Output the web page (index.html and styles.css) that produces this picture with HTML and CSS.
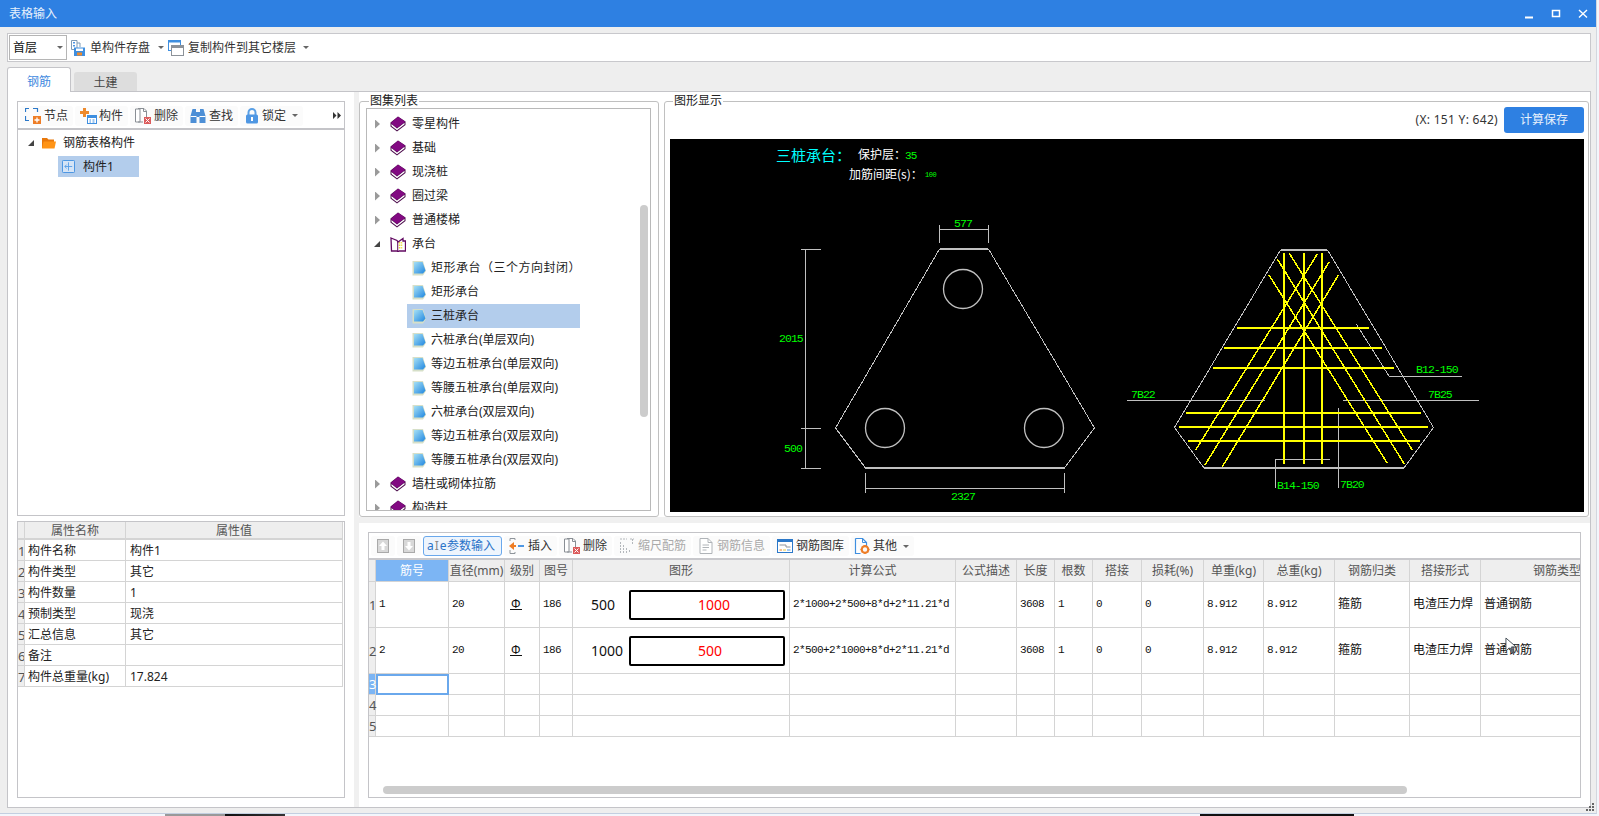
FILE: index.html
```html
<!DOCTYPE html>
<html lang="zh-CN">
<head>
<meta charset="utf-8">
<title>表格输入</title>
<link rel="stylesheet" href="styles.css">
</head>
<body>
<svg class="defs" width="0" height="0" aria-hidden="true">
  <defs>
    <linearGradient id="docblue" x1="0" y1="0" x2="1" y2="1"><stop offset="0" stop-color="#a6e0f5"/><stop offset="1" stop-color="#1f86e0"/></linearGradient>
    <symbol id="book" viewBox="0 0 16 16">
      <path d="M8 .5 15.500 5.500V9L7 15.500.5 10.500V6.500Z" fill="#4a0a4a"/>
      <path d="M1.500 8 7 12.500 14.500 6.800V8.500L7 14.300 1.500 10Z" fill="#fff"/>
      <path d="M8 .8 15.300 5.800 7 12 .8 7Z" fill="#820a82"/>
    </symbol>
    <symbol id="bookopen" viewBox="0 0 16 16">
      <path d="M1 2 7 4.500 8 6 13 2.500V5H15.500V15H9L8 16 7 15H1.500Z" fill="#fff" stroke="#620a62" stroke-width="1.300"/>
      <path d="M9.500 6V13" stroke="#e8d83a" stroke-width="1.500" stroke-dasharray="1.500 1"/>
      <path d="M11.500 6V13" stroke="#f0e050" stroke-width="1.500" stroke-dasharray="1.500 1"/>
      <path d="M7.700 5V15" stroke="#620a62"/>
    </symbol>
    <symbol id="doc" viewBox="0 0 14 16">
      <path d="M.5 1H11L14 11 11 15.500H.5Z" fill="#d6dfc8"/>
      <path d="M2 2H10.500L13.500 10.500 11 13.500H2Z" fill="url(#docblue)"/>
    </symbol>
    <symbol id="node" viewBox="0 0 16 16">
      <path d="M.5 4V.5H4M8 .5H12.500V4M.5 8V12.500H4" fill="none" stroke="#2b78c9" stroke-width="1.200"/>
      <rect x="8" y="8" width="8" height="8" fill="#ee7d26"/>
      <path d="M12 9.500V14.500M9.500 12H14.500" stroke="#fff" stroke-width="1.300"/>
    </symbol>
    <symbol id="part" viewBox="0 0 18 16">
      <path d="M4 0H7V3H10V6H7V9H4V6H1V3H4Z" fill="#ee8a2c"/>
      <rect x="8.500" y="7.500" width="9" height="8" fill="#fff" stroke="#3f8fe0"/>
      <rect x="8.500" y="7.500" width="9" height="2.500" fill="#3f8fe0"/>
      <path d="M10.500 12H12M13.500 12H15.500M10.500 14H12M13.500 14H15.500" stroke="#3f8fe0"/>
    </symbol>
    <symbol id="del" viewBox="0 0 16 16">
      <path d="M.5 1H5V14H.5ZM3 .5H9L11.500 3V9M3 14H8" fill="#fff" stroke="#8a8f95"/>
      <path d="M8.500 1V3.500H11" fill="none" stroke="#8a8f95"/>
      <rect x="9" y="9" width="7" height="7" fill="#dc5b5b"/>
      <path d="M10.500 10.500 14.500 14.500M14.500 10.500 10.500 14.500" stroke="#fff"/>
    </symbol>
    <symbol id="find" viewBox="0 0 16 16">
      <path d="M2.500 1H6V4H10V1H13.500L15.500 8V15H9.500V9H6.500V15H.5V8Z" fill="#4d8fd6"/>
      <path d="M.5 8.500H6.500M9.500 8.500H15.500" stroke="#fff"/>
    </symbol>
    <symbol id="lock" viewBox="0 0 14 16">
      <path d="M3.500 7V4.500A3.500 3.500 0 0 1 10.500 4.500V7" fill="none" stroke="#5aa0e6" stroke-width="2"/>
      <rect x="1" y="6.500" width="12" height="9" rx="1.500" fill="#4f97e3"/>
      <rect x="6" y="9" width="2" height="4" fill="#fff"/>
    </symbol>
    <symbol id="save" viewBox="0 0 14 16">
      <path d="M.5 .5H6V9.500H.5ZM6 3H9V7" fill="#fff" stroke="#7f9bb5"/>
      <rect x="2" y="2" width="2" height="1.500" fill="#4f97e3"/><rect x="2" y="5" width="2" height="1.500" fill="#4f97e3"/>
      <rect x="3" y="7.500" width="11" height="8.500" fill="#3f8fe0"/>
      <rect x="5" y="8.500" width="7" height="2.500" fill="#fff"/><rect x="6" y="12.500" width="5" height="3" fill="#ee8a2c"/>
    </symbol>
    <symbol id="copy" viewBox="0 0 16 16">
      <rect x=".5" y=".5" width="12" height="10" fill="#fff" stroke="#3f8fe0"/>
      <rect x="0" y="0" width="13" height="2.500" fill="#3f8fe0"/>
      <rect x="3.500" y="5.500" width="12" height="10" fill="#fff" stroke="#8c9299"/>
      <rect x="3" y="5" width="13" height="3" fill="#8c9299"/>
    </symbol>
    <symbol id="up" viewBox="0 0 12 14">
      <rect x=".5" y=".5" width="11" height="13" fill="#d8d8d8" stroke="#a9a9a9"/>
      <path d="M6 2.500 10 7H7.500V11H4.500V7H2Z" fill="#fff"/>
    </symbol>
    <symbol id="down" viewBox="0 0 12 14">
      <rect x=".5" y=".5" width="11" height="13" fill="#d8d8d8" stroke="#a9a9a9"/>
      <path d="M6 11.500 10 7H7.500V3H4.500V7H2Z" fill="#fff"/>
    </symbol>
    <symbol id="insert" viewBox="0 0 16 16">
      <path d="M1 .5H6M1 .5V3M6 .5V2M1 12V15.500H6V14" fill="none" stroke="#8f959b"/>
      <path d="M0 8 5 4V7H7V9H5V12Z" fill="#ee7d26"/>
      <rect x="9" y="7" width="6" height="2" fill="#4f97e3"/>
    </symbol>
    <symbol id="scale" viewBox="0 0 16 16">
      <path d="M1.500 4V15M4.500 7V15M7.500 10V15M10.500 12V15M1 1H8M11 1H15M13.500 1V6" fill="none" stroke="#b4b8bc" stroke-dasharray="2 1"/>
    </symbol>
    <symbol id="info" viewBox="0 0 14 16">
      <path d="M1 .5H9L13 4.500V15.500H1Z" fill="#fff" stroke="#b0b4b8"/>
      <path d="M9 .5V4.500H13M3.500 7H10M3.500 9.500H10M3.500 12H7.500" fill="none" stroke="#b0b4b8"/>
    </symbol>
    <symbol id="lib" viewBox="0 0 16 14">
      <rect x=".5" y=".5" width="15" height="13" fill="#fff" stroke="#2b78c9"/>
      <rect x="0" y="0" width="16" height="3" fill="#2b78c9"/>
      <path d="M2.500 6H9V8H13.500" fill="none" stroke="#8f959b"/>
      <path d="M2.500 11H5" stroke="#ee7d26"/><path d="M6 11H9" stroke="#e8c93a"/><path d="M10 11H13.500" stroke="#4f97e3"/>
    </symbol>
    <symbol id="other" viewBox="0 0 15 16">
      <path d="M1 .5H8L12 4.500V8M6 15.500H1V.5" fill="#fff" stroke="#3f8fe0" stroke-width="1.200"/>
      <path d="M8 .5V4.500H12" fill="none" stroke="#3f8fe0"/>
      <circle cx="10.500" cy="11.500" r="3.300" fill="none" stroke="#ee7d26" stroke-width="2.200"/>
      <path d="M10.500 7V16M6 11.500H15M7.500 8.500 13.500 14.500M13.500 8.500 7.500 14.500" stroke="#ee7d26" stroke-dasharray="1.200 6.600 1.200"/>
    </symbol>
    <symbol id="item" viewBox="0 0 14 14">
      <rect x=".5" y=".5" width="13" height="13" rx="1" fill="#d5e4f6" stroke="#3f8fe0"/>
      <path d="M7 2.500V11.500M3 7H11M5 5 3 7 5 9" fill="none" stroke="#5a9fe6"/>
    </symbol>
  </defs>
</svg>

<div class="window">
  <header class="titlebar">
    <span class="title">表格输入</span>
    <div class="winctl">
      <svg class="wc" viewBox="0 0 10 10"><path d="M1 8.500H9" stroke="#fff" stroke-width="2"/></svg>
      <svg class="wc" viewBox="0 0 10 10"><rect x="1.500" y="1.500" width="7" height="6" fill="none" stroke="#fff" stroke-width="1.500"/></svg>
      <svg class="wc" viewBox="0 0 10 10"><path d="M1 1 9 8.500M9 1 1 8.500" stroke="#fff" stroke-width="1.400"/></svg>
    </div>
  </header>

  <div class="topbar">
    <div class="floor"><span>首层</span><i class="caret"></i></div>
    <div class="topitem"><svg class="ic14"><use href="#save"/></svg><span>单构件存盘</span><i class="caret"></i></div>
    <div class="topitem copy"><svg class="ic16"><use href="#copy"/></svg><span>复制构件到其它楼层</span><i class="caret"></i></div>
  </div>

  <div class="tabs">
    <div class="tab active">钢筋</div>
    <div class="tab">土建</div>
  </div>

  <main class="panel">
    <section class="left">
      <div class="treebox">
        <div class="bar">
          <div class="btn"><svg class="ic16"><use href="#node"/></svg><span>节点</span></div>
          <div class="btn"><svg class="ic18"><use href="#part"/></svg><span>构件</span></div>
          <div class="btn"><svg class="ic16"><use href="#del"/></svg><span>删除</span></div>
          <div class="btn"><svg class="ic16"><use href="#find"/></svg><span>查找</span></div>
          <div class="btn"><svg class="ic14"><use href="#lock"/></svg><span>锁定</span><i class="caret"></i></div>
          <svg class="more" viewBox="0 0 8 7"><path d="M0 0 3.500 3.500 0 7ZM4.500 0 8 3.500 4.500 7Z" fill="#333"/></svg>
        </div>
        <div class="tree">
          <div class="troot"><i class="open"></i>
            <svg class="folder" viewBox="0 0 14 12"><path d="M0 1H5L6.500 2.500H12V11H0Z" fill="#e8780c"/><path d="M1.500 4.500H14L12.500 11.500H0Z" fill="#ff9416"/></svg>
            <span>钢筋表格构件</span></div>
          <div class="tleaf"><svg class="ic14"><use href="#item"/></svg><span>构件1</span></div>
        </div>
      </div>
      <div class="propbox">
        <table class="props">
          <colgroup><col class="p0"><col class="p1"><col class="p2"></colgroup>
          <thead><tr><th></th><th>属性名称</th><th>属性值</th></tr></thead>
          <tbody>
            <tr><th>1</th><td>构件名称</td><td class="v">构件1</td></tr>
            <tr><th>2</th><td>构件类型</td><td class="v">其它</td></tr>
            <tr><th>3</th><td>构件数量</td><td class="v">1</td></tr>
            <tr><th>4</th><td>预制类型</td><td class="v">现浇</td></tr>
            <tr><th>5</th><td>汇总信息</td><td class="v">其它</td></tr>
            <tr><th>6</th><td>备注</td><td class="v"></td></tr>
            <tr><th>7</th><td>构件总重量(kg)</td><td class="v">17.824</td></tr>
          </tbody>
        </table>
      </div>
    </section>

    <div class="vsplit"></div>

    <section class="right">
      <div class="upper">
        <fieldset class="fs fs-list">
          <legend>图集列表</legend>
          <div class="list">
            <div class="li"><i class="closed"></i><svg class="ic16"><use href="#book"/></svg><span>零星构件</span></div>
            <div class="li"><i class="closed"></i><svg class="ic16"><use href="#book"/></svg><span>基础</span></div>
            <div class="li"><i class="closed"></i><svg class="ic16"><use href="#book"/></svg><span>现浇桩</span></div>
            <div class="li"><i class="closed"></i><svg class="ic16"><use href="#book"/></svg><span>圈过梁</span></div>
            <div class="li"><i class="closed"></i><svg class="ic16"><use href="#book"/></svg><span>普通楼梯</span></div>
            <div class="li"><i class="open"></i><svg class="ic16"><use href="#bookopen"/></svg><span>承台</span></div>
            <div class="sub"><svg class="ic14"><use href="#doc"/></svg><span class="paren">矩形承台（三个方向封闭）</span></div>
            <div class="sub"><svg class="ic14"><use href="#doc"/></svg><span>矩形承台</span></div>
            <div class="sub sel"><svg class="ic14"><use href="#doc"/></svg><span>三桩承台</span></div>
            <div class="sub"><svg class="ic14"><use href="#doc"/></svg><span>六桩承台(单层双向)</span></div>
            <div class="sub"><svg class="ic14"><use href="#doc"/></svg><span>等边五桩承台(单层双向)</span></div>
            <div class="sub"><svg class="ic14"><use href="#doc"/></svg><span>等腰五桩承台(单层双向)</span></div>
            <div class="sub"><svg class="ic14"><use href="#doc"/></svg><span>六桩承台(双层双向)</span></div>
            <div class="sub"><svg class="ic14"><use href="#doc"/></svg><span>等边五桩承台(双层双向)</span></div>
            <div class="sub"><svg class="ic14"><use href="#doc"/></svg><span>等腰五桩承台(双层双向)</span></div>
            <div class="li"><i class="closed"></i><svg class="ic16"><use href="#book"/></svg><span>墙柱或砌体拉筋</span></div>
            <div class="li"><i class="closed"></i><svg class="ic16"><use href="#book"/></svg><span>构造柱</span></div>
            <div class="vthumb"></div>
          </div>
        </fieldset>

        <fieldset class="fs fs-draw">
          <legend>图形显示</legend>
          <div class="drawhead">
            <span class="coords">(X: 151 Y: 642)</span>
            <div class="savebtn">计算保存</div>
          </div>
          <svg class="cad" viewBox="670 139 914 373" width="914" height="373">
            <rect x="670" y="139" width="914" height="373" fill="#000"/>
            <text x="776" y="161" class="t-title">三桩承台：</text>
            <text x="858" y="159" class="t-label">保护层：</text>
            <text x="905" y="159" class="t-small">35</text>
            <text x="849" y="179" class="t-label">加筋间距(s)：</text>
            <text x="925" y="177" class="t-tiny">100</text>

            <g class="ln">
              <path d="M939.500 249H988.500L1094.500 428 1064.500 468H865.500L835.500 428Z"/>
              <path d="M939.500 225V243M988.500 225V243M939.500 229.500H988.500"/>
              <path d="M805.500 249V469M801 249.500H821M801 428.500H821M801 468.500H821"/>
              <path d="M865.500 473V493M1064.500 473V493M865.500 488.500H1064.500"/>
              <path class="heavy" d="M940 249H988M866 468H1064"/>
              <circle class="ring" cx="963" cy="289" r="19.500"/>
              <circle class="ring" cx="885" cy="428" r="19.500"/>
              <circle class="ring" cx="1044" cy="428" r="19.500"/>
            </g>
            <text x="963" y="227" class="t-dim mid">577</text>
            <text x="779" y="342" class="t-dim">2015</text>
            <text x="784" y="452" class="t-dim">500</text>
            <text x="963" y="500" class="t-dim mid">2327</text>

            <g class="ln">
              <path d="M1280.500 250H1327.500L1433.500 427.500 1404 468H1204L1174.500 427.500Z"/>
              <path class="heavy" d="M1281 250H1327M1204 468H1404"/>
              <path d="M1127 400.500H1264.500M1343 400.500H1479"/>
              <path d="M1356.500 324.500 1389 376H1462"/>
              <path d="M1275.500 488V459.500H1330"/>
              <path d="M1338.500 408V488"/>
            </g>
            <g class="rb">
              <path d="M1284 253V464M1304 253V464M1322 253V464"/>
              <path d="M1237 328H1369M1224 348H1382M1213 368H1394M1186 413H1421M1179 427H1428M1188 441H1420"/>
            </g>
            <g class="rb thin">
              <path d="M1289.300 253.300 1412.300 450M1277.300 259 1404.300 464M1269 275 1387.300 463.300"/>
              <path d="M1317.300 254 1195.700 450M1329.300 261.700 1205 465M1338.300 275.300 1222.300 466.700"/>
            </g>
            <text x="1131" y="398" class="t-dim">7B22</text>
            <text x="1428" y="398" class="t-dim">7B25</text>
            <text x="1416" y="373" class="t-dim">B12-150</text>
            <text x="1277" y="489" class="t-dim">B14-150</text>
            <text x="1340" y="488" class="t-dim">7B20</text>
          </svg>
        </fieldset>
      </div>

      <div class="hsplit"></div>

      <div class="lower">
        <div class="gridbox">
          <div class="gbar">
            <div class="btn dis sq"><svg class="ic12"><use href="#up"/></svg></div>
            <div class="btn dis sq"><svg class="ic12"><use href="#down"/></svg></div>
            <div class="btn on">
              <span class="aie"><b>a</b><b class="beam">I</b><b>e</b></span><span>参数输入</span>
            </div>
            <div class="btn"><svg class="ic16"><use href="#insert"/></svg><span>插入</span></div>
            <div class="btn"><svg class="ic16"><use href="#del"/></svg><span>删除</span></div>
            <div class="btn dis"><svg class="ic16"><use href="#scale"/></svg><span>缩尺配筋</span></div>
            <div class="btn dis"><svg class="ic14 pad1"><use href="#info"/></svg><span>钢筋信息</span></div>
            <div class="btn"><svg class="ic16"><use href="#lib"/></svg><span>钢筋图库</span></div>
            <div class="btn tight"><svg class="ic16"><use href="#other"/></svg><span>其他</span><i class="caret"></i></div>
          </div>
          <div class="gridwrap">
            <table class="grid">
              <colgroup>
                <col class="c0"><col class="c1"><col class="c2"><col class="c3"><col class="c4"><col class="c5"><col class="c6"><col class="c7"><col class="c8"><col class="c9"><col class="c10"><col class="c11"><col class="c12"><col class="c13"><col class="c14"><col class="c15"><col class="c16">
              </colgroup>
              <thead>
                <tr class="rh"><th></th><th class="hsel">筋号</th><th>直径(mm)</th><th>级别</th><th>图号</th><th>图形</th><th>计算公式</th><th>公式描述</th><th>长度</th><th>根数</th><th>搭接</th><th>损耗(%)</th><th>单重(kg)</th><th>总重(kg)</th><th>钢筋归类</th><th>搭接形式</th><th>钢筋类型</th></tr>
              </thead>
              <tbody>
                <tr class="rt">
                  <th>1</th><td class="m">1</td><td class="m">20</td><td><span class="grade">Φ</span></td><td class="m">186</td>
                  <td class="fig"><div class="figin"><span class="fnum">500</span><span class="frect">1000</span></div></td>
                  <td class="m">2*1000+2*500+8*d+2*11.21*d</td><td></td><td class="m">3608</td><td class="m">1</td><td class="m">0</td><td class="m">0</td><td class="m">8.912</td><td class="m">8.912</td><td>箍筋</td><td>电渣压力焊</td><td>普通钢筋</td>
                </tr>
                <tr class="rt">
                  <th>2</th><td class="m">2</td><td class="m">20</td><td><span class="grade">Φ</span></td><td class="m">186</td>
                  <td class="fig"><div class="figin"><span class="fnum">1000</span><span class="frect">500</span></div></td>
                  <td class="m">2*500+2*1000+8*d+2*11.21*d</td><td></td><td class="m">3608</td><td class="m">1</td><td class="m">0</td><td class="m">0</td><td class="m">8.912</td><td class="m">8.912</td><td>箍筋</td><td>电渣压力焊</td><td>普通钢筋</td>
                </tr>
                <tr><th class="hsel">3</th><td class="focus"></td><td></td><td></td><td></td><td></td><td></td><td></td><td></td><td></td><td></td><td></td><td></td><td></td><td></td><td></td><td></td></tr>
                <tr><th>4</th><td></td><td></td><td></td><td></td><td></td><td></td><td></td><td></td><td></td><td></td><td></td><td></td><td></td><td></td><td></td><td></td></tr>
                <tr><th>5</th><td></td><td></td><td></td><td></td><td></td><td></td><td></td><td></td><td></td><td></td><td></td><td></td><td></td><td></td><td></td><td></td></tr>
              </tbody>
            </table>
          </div>
          <div class="hthumb"></div>
          <svg class="cursor" viewBox="0 0 14 18"><path d="M1 1V15L4.500 11.500 7 17 9.500 16 7 10.500H12Z" fill="#fff" stroke="#3c4650"/><path d="M5 12 7 16.500 9 15.500 7 11Z" fill="#5a6570"/></svg>
        </div>
      </div>
    </section>
    <svg class="grip" viewBox="0 0 8 8"><path d="M6 0H8V2H6ZM3 3H5V5H3ZM6 3H8V5H6ZM0 6H2V8H0ZM3 6H5V8H3ZM6 6H8V8H6Z" fill="#666"/></svg>
  </main>
</div>
<div class="under"></div>
</body>
</html>
```
FILE: styles.css
```css
* { box-sizing: border-box; }
html, body { margin: 0; height: 100%; }
body {
  width: 1599px;
  height: 816px;
  overflow: hidden;
  background: #f3f6fb;
  font: 12px/16px "Noto Sans", "Noto Sans CJK SC", sans-serif;
  color: #222;
}
.defs { position: absolute; }
svg { display: block; flex: none; }
.ic12 { width: 12px; height: 14px; }
.ic14 { width: 14px; height: 16px; }
.ic14.pad1 { margin: 0 1px; }
.ic16 { width: 16px; height: 16px; }
.ic18 { width: 18px; height: 16px; margin: 0 -1px; }

.window { width: 1597px; height: 814px; background: #eeeeee; border-right: 1px solid #d3d7de; border-bottom: 1px solid #c3cfe0; }
.titlebar { height: 27px; background: #2e80e2; color: #e8f1fc; display: flex; align-items: center; justify-content: space-between; padding-left: 9px; }
.winctl { display: flex; gap: 17px; padding-right: 8px; }
.wc { width: 10px; height: 10px; }

.topbar { height: 29px; margin: 6px 5px 0 7px; background: #fff; border: 1px solid #c8c8cc; display: flex; align-items: center; padding-left: 1px; color: #333; }
.floor { width: 58px; height: 25px; border: 1px solid #b5b5b5; display: flex; align-items: center; justify-content: space-between; padding: 0 3px 0 3px; color: #111; }
.topitem { display: flex; align-items: center; gap: 5px; margin-left: 4px; }
.topitem.copy { margin-left: 4px; gap: 4px; }
.topitem .caret { margin-left: 3px; }
.caret { display: block; width: 0; height: 0; border: 3px solid transparent; border-top: 3px solid #666; border-bottom: 0; flex: none; }

.tabs { height: 25px; margin: 5px 0 -1px 7px; display: flex; align-items: flex-end; gap: 3px; position: relative; }
.tab { width: 63px; height: 20px; background: #dddddd; border-radius: 3px 3px 0 0; text-align: center; line-height: 22px; color: #444; }
.tab.active { width: 64px; height: 25px; background: #fff; border: 1px solid #c4c4c8; border-bottom: 0; color: #3f8ae0; line-height: 27px; position: relative; z-index: 1; }

.panel { height: 717px; margin: 0 5px 0 7px; background: #fff; border: 1px solid #c4c4c8; display: flex; position: relative; }
.left { width: 346px; padding: 9px; display: flex; flex-direction: column; gap: 5px; flex: none; }
.treebox { height: 415px; border: 1px solid #c4c4c8; display: flex; flex-direction: column; }
.bar { height: 28px; flex: none; border-bottom: 2px solid #c4c4c8; display: flex; align-items: center; gap: 2px; padding: 1px 0 0 2px; color: #333; }
.btn { height: 20px; padding: 0 5px; display: flex; align-items: center; gap: 3px; background: #fbfbfb; border-radius: 3px; flex: none; white-space: nowrap; }
.btn .caret { margin-left: 3px; }
.btn.tight { padding-left: 3px; }
.more { width: 8px; height: 7px; margin-left: auto; margin-right: 3px; }
.tree { flex: 1; padding-top: 2px; color: #222; }
.troot { height: 22px; display: flex; align-items: center; padding-left: 10px; }
.folder { width: 14px; height: 12px; margin: 0 7px 0 8px; }
.open { display: block; width: 0; height: 0; border-style: solid; border-width: 0 0 6px 6px; border-color: transparent transparent #444 transparent; flex: none; }
.closed { display: block; width: 5px; height: 9px; flex: none; clip-path: polygon(0 0, 100% 50%, 0 100%); background: #9a9a9a; }
.tleaf { height: 21px; width: 81px; margin: 2px 0 0 40px; background: #b3cdec; display: flex; align-items: center; gap: 8px; padding-left: 4px; }
.tleaf .ic14 { width: 13px; height: 13px; }

.propbox { height: 277px; border: 1px solid #c4c4c8; }
.props { border-collapse: separate; border-spacing: 0; table-layout: fixed; width: 325px; }
.p0 { width: 7px; } .p1 { width: 101px; } .p2 { width: 217px; }
.props th, .props td, .grid th, .grid td { border-right: 1px solid #d4d4d4; border-bottom: 1px solid #d4d4d4; padding: 0; white-space: nowrap; overflow: hidden; font-weight: 400; }
.props thead th { height: 17px; background: #eeeeee; color: #555; line-height: 15px; border-bottom-width: 2px; padding-top: 1px; }
.props tbody th { height: 21px; background: #eeeeee; color: #555; font-size: 13px; text-align: center; padding-top: 1px; }
.props td { height: 21px; padding: 1px 0 0 3px; color: #222; }
.props td.v { padding-left: 4px; }

.vsplit { width: 5px; background: #f0f0f0; flex: none; }
.right { flex: 1; min-width: 0; display: flex; flex-direction: column; }
.upper { height: 425px; padding: 2px 1px 0 0; display: flex; gap: 5px; }
.hsplit { height: 6px; background: #f0f0f0; flex: none; }
.fs { margin: 0; min-width: 0; border: 1px solid #c0c0c0; border-radius: 3px; height: 423px; }
.fs legend { padding: 0 1px; margin-left: 3px; line-height: 14px; height: 14px; color: #222; }
.fs-list { width: 300px; flex: none; padding: 0 7px 5px 6px; }
.list { height: 403px; border: 1px solid #b9b9b9; padding-top: 3px; overflow: hidden; position: relative; }
.li { height: 24px; display: flex; align-items: center; padding-left: 8px; }
.li .ic16 { margin: 0 6px 0 10px; }
.li .open { margin-left: -1px; }
.sub { height: 24px; width: 173px; margin-left: 40px; padding-left: 5px; display: flex; align-items: center; gap: 5px; white-space: nowrap; }
.sub .ic14 { width: 14px; height: 16px; }
.sub.sel { background: #b3cdec; }
.paren { font-kerning: none; word-spacing: 0; letter-spacing: .5px; }
.vthumb { position: absolute; left: 273px; top: 96px; width: 8px; height: 212px; background: #cccccc; border-radius: 4px; }

.fs-draw { flex: 1; padding: 0 4px 4px 5px; }
.drawhead { height: 26px; margin: -1px 0 6px; display: flex; justify-content: flex-end; align-items: center; gap: 6px; }
.coords { color: #333; letter-spacing: .3px; }
.savebtn { width: 80px; height: 26px; background: #2e80e2; border-radius: 3px; color: #e8f1fc; text-align: center; line-height: 25px; }
.cad text { font-family: "Liberation Mono", "Noto Sans CJK SC", monospace; fill: #00ff00; }
.cad .t-title { font-family: "Noto Sans CJK SC", sans-serif; font-size: 15px; fill: #00ffff; }
.cad .t-label { font-family: "Noto Sans CJK SC", sans-serif; font-size: 12px; fill: #fff; }
.t-small { font-size: 11px; letter-spacing: -.8px; }
.t-tiny { font-size: 7px; letter-spacing: -.5px; }
.t-dim { font-size: 11.500px; letter-spacing: -.95px; }
.mid { text-anchor: middle; }
.ln { fill: none; stroke: #c0c0c0; stroke-width: 1; shape-rendering: crispEdges; }
.ln .heavy { stroke-width: 2; }
.ln .ring { stroke-width: 1.300; shape-rendering: auto; }
.rb { fill: none; stroke: #ffff00; stroke-width: 2; shape-rendering: crispEdges; }
.rb.thin { stroke-width: 1.500; }

.lower { height: 284px; padding: 9px; }
.gridbox { height: 266px; border: 1px solid #c4c4c8; display: flex; flex-direction: column; position: relative; }
.gbar { height: 27px; flex: none; border-bottom: 2px solid #c8c8cc; display: flex; align-items: center; gap: 2px; padding: 1px 0 0 2px; color: #333; }
.btn.sq { width: 24px; justify-content: center; padding: 0; }
.btn.dis { color: #aaaaaa; }
.btn.on { width: 79px; background: #eef5fd; border: 1px solid #6aa8ec; color: #2a73c8; gap: 3px; padding: 0 0 0 3px; }
.aie { display: flex; width: 17px; font-size: 12px; color: #2a73c8; line-height: 16px; }
.aie b { font-weight: 400; }
.aie .beam { color: #888; margin: 0 1px; }
.gridwrap { height: 225px; overflow: hidden; flex: none; }
.grid { border-collapse: separate; border-spacing: 0; table-layout: fixed; width: 1265px; }
.c0 { width: 7px; } .c1 { width: 73px; } .c2 { width: 56px; } .c3 { width: 35px; } .c4 { width: 33px; } .c5 { width: 217px; } .c6 { width: 166px; } .c7 { width: 61px; } .c8 { width: 38px; } .c9 { width: 38px; } .c10 { width: 49px; } .c11 { width: 62px; } .c12 { width: 60px; } .c13 { width: 71px; } .c14 { width: 75px; } .c15 { width: 71px; } .c16 { width: 153px; }
.grid thead th { height: 22px; background: #eeeeee; color: #555; text-align: center; padding-top: 1px; }
.grid tbody th { height: 21px; background: #eeeeee; color: #555; font-size: 13px; text-align: center; overflow: visible; }
.grid td { height: 21px; padding-left: 3px; color: #111; }
.grid .rt td, .grid .rt th { height: 46px; }
.grid .rt td { padding-bottom: 1px; }
.grid .hsel, .grid thead .hsel, .grid tbody .hsel { background: #7cb5f4; color: #fff; }
.grid .focus { border: 2px solid #6aa8ec; }
.grid .m { font-family: "Liberation Mono", monospace; font-size: 11px; letter-spacing: -.6px; line-height: 14px; }
.grade { display: inline-block; font: 12px/9px "Liberation Sans", sans-serif; border-bottom: 1px solid #111; margin-left: 2px; padding: 0 1px; }
.grid td.fig { padding: 0; }
.figin { display: flex; align-items: center; padding-left: 18px; font-size: 14px; }
.fnum { width: 38px; flex: none; color: #111; }
.frect { width: 156px; height: 30px; border: 2px solid #000; border-radius: 2px; padding-left: 67px; line-height: 26px; color: #f00; flex: none; }
.hthumb { height: 8px; flex: none; margin: 1px 173px 0 14px; background: #cccccc; border-radius: 4px; }
.cursor { position: absolute; left: 1136px; top: 104px; width: 13px; height: 17px; }

.grip { position: absolute; right: -4px; bottom: -4px; width: 8px; height: 8px; }
.under { height: 2px; background: linear-gradient(90deg, transparent 165px, #999 165px, #999 225px, #111 225px, #333 285px, transparent 285px, transparent 1200px, #111 1200px, #111 1354px, transparent 1354px); }
```
